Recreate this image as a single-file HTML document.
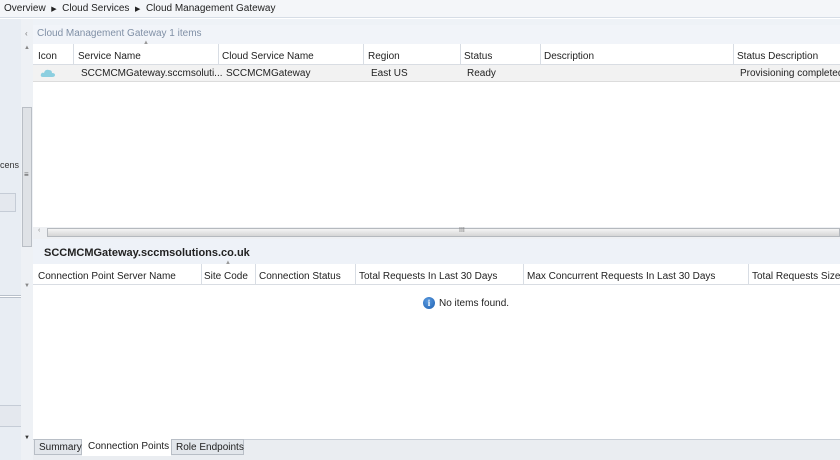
<!DOCTYPE html>
<html><head><style>
*{margin:0;padding:0;box-sizing:border-box}
body{width:840px;height:460px;overflow:hidden;background:#fff;font-family:"Liberation Sans",sans-serif;font-size:10px;color:#222;position:relative}
.a{position:absolute;white-space:nowrap}
.sep{position:absolute;width:1px;background:#d8dde4}
</style></head><body>
<div class="a" style="left:0;top:0;width:840px;height:18px;background:#f4f6f9;border-bottom:1px solid #d6dde6"></div>
<div class="a" style="left:4px;top:3px">Overview&nbsp;&nbsp;<span style="font-size:7px">▶</span>&nbsp;&nbsp;Cloud Services&nbsp;&nbsp;<span style="font-size:7px">▶</span>&nbsp;&nbsp;Cloud Management Gateway</div>
<div class="a" style="left:0;top:19px;width:840px;height:6px;background:#eef2f7"></div>
<!-- left panel -->
<div class="a" style="left:0;top:19px;width:21px;height:441px;background:#e8edf3"></div>
<div class="a" style="left:0;top:160px;font-size:9px;color:#333">cens</div>
<div class="a" style="left:0;top:193px;width:16px;height:19px;background:#e4e8ee;border:1px solid #c5ccd6;border-left:none"></div>
<div class="a" style="left:0;top:295px;width:28px;height:3px;border:1px solid #b8c0ca;border-left:none;background:#fff"></div>
<div class="a" style="left:0;top:405px;width:28px;height:22px;background:#e4e8ee;border:1px solid #c5ccd6;border-left:none"></div>
<div class="a" style="left:21px;top:19px;width:12px;height:441px;background:#eef1f5"></div>
<div class="a" style="left:22px;top:107px;width:10px;height:140px;background:#dfe2e6;border:1px solid #b9bec5"></div>
<div class="a" style="left:24px;top:170px;font-size:8px;color:#555">≡</div>
<div class="a" style="left:24px;top:45px;font-size:6px;color:#888">▲</div>
<div class="a" style="left:24px;top:283px;font-size:6px;color:#888">▼</div>
<div class="a" style="left:24px;top:435px;font-size:6px;color:#333">▼</div>
<div class="a" style="left:25px;top:29px;font-size:8px;color:#777">‹</div>
<!-- top list -->
<div class="a" style="left:33px;top:25px;width:807px;height:19px;background:#f1f4f9"></div>
<div class="a" style="left:37px;top:28px;color:#8090a6">Cloud Management Gateway 1 items</div>
<div class="a" style="left:33px;top:44px;width:807px;height:21px;border-bottom:1px solid #d9dde3"></div>
<div class="sep" style="left:73px;top:44px;height:20px"></div>
<div class="sep" style="left:218px;top:44px;height:20px"></div>
<div class="sep" style="left:363px;top:44px;height:20px"></div>
<div class="sep" style="left:460px;top:44px;height:20px"></div>
<div class="sep" style="left:540px;top:44px;height:20px"></div>
<div class="sep" style="left:733px;top:44px;height:20px"></div>
<div class="a" style="left:143px;top:40px;font-size:6px;color:#999">▲</div>
<div class="a" style="left:38px;top:51px">Icon</div>
<div class="a" style="left:78px;top:51px">Service Name</div>
<div class="a" style="left:222px;top:51px">Cloud Service Name</div>
<div class="a" style="left:368px;top:51px">Region</div>
<div class="a" style="left:464px;top:51px">Status</div>
<div class="a" style="left:544px;top:51px">Description</div>
<div class="a" style="left:737px;top:51px">Status Description</div>
<div class="a" style="left:33px;top:65px;width:807px;height:17px;background:#f2f2f2;border-bottom:1px solid #dcdcdc"></div>
<svg class="a" style="left:40px;top:68px" width="16" height="10"><path d="M3 9 Q0 9 1 6 Q2 4 4 5 Q5 1 9 2 Q12 2 12 5 Q15 5 15 7 Q15 9 12 9Z" fill="#8ccfe0"/></svg>
<div class="a" style="left:81px;top:68px">SCCMCMGateway.sccmsoluti...</div>
<div class="a" style="left:226px;top:68px">SCCMCMGateway</div>
<div class="a" style="left:371px;top:68px">East US</div>
<div class="a" style="left:467px;top:68px">Ready</div>
<div class="a" style="left:740px;top:68px">Provisioning completed</div>
<!-- h scroll -->
<div class="a" style="left:33px;top:227px;width:807px;height:12px;background:#eef0f3"></div>
<div class="a" style="left:47px;top:228px;width:793px;height:9px;background:linear-gradient(#f4f4f4,#d6d6d6);border:1px solid #b5b9be"></div>
<div class="a" style="left:38px;top:227px;font-size:7px;color:#888">‹</div>
<div class="a" style="left:459px;top:227px;font-size:7px;color:#777">III</div>
<!-- details -->
<div class="a" style="left:33px;top:239px;width:807px;height:25px;background:#eef2f8"></div>
<div class="a" style="left:44px;top:247px;font-size:11px;font-weight:bold;color:#222">SCCMCMGateway.sccmsolutions.co.uk</div>
<div class="a" style="left:33px;top:264px;width:807px;height:21px;border-bottom:1px solid #d9dde3;background:#fff"></div>
<div class="sep" style="left:201px;top:264px;height:20px"></div>
<div class="sep" style="left:255px;top:264px;height:20px"></div>
<div class="sep" style="left:355px;top:264px;height:20px"></div>
<div class="sep" style="left:523px;top:264px;height:20px"></div>
<div class="sep" style="left:748px;top:264px;height:20px"></div>
<div class="a" style="left:225px;top:260px;font-size:6px;color:#999">▲</div>
<div class="a" style="left:38px;top:271px">Connection Point Server Name</div>
<div class="a" style="left:204px;top:271px">Site Code</div>
<div class="a" style="left:259px;top:271px">Connection Status</div>
<div class="a" style="left:359px;top:271px">Total Requests In Last 30 Days</div>
<div class="a" style="left:527px;top:271px">Max Concurrent Requests In Last 30 Days</div>
<div class="a" style="left:752px;top:271px">Total Requests Size (</div>
<div class="a" style="left:423px;top:297px;width:12px;height:12px;border-radius:50%;background:radial-gradient(circle at 40% 35%,#5b9be0,#1d5fb0);color:#fff;font-size:9px;font-weight:bold;text-align:center;line-height:12px;font-family:'Liberation Serif',serif">i</div>
<div class="a" style="left:439px;top:298px">No items found.</div>
<!-- tabs -->
<div class="a" style="left:33px;top:439px;width:807px;height:1px;background:#c8ced6"></div>
<div class="a" style="left:33px;top:440px;width:807px;height:20px;background:#eaedf1"></div>
<div class="a" style="left:34px;top:439px;width:48px;height:16px;background:#e2e6eb;border:1px solid #b8bec6;padding:2px 0 0 4px">Summary</div>
<div class="a" style="left:82px;top:439px;width:89px;height:17px;background:#fff;padding:2px 0 0 6px">Connection Points</div>
<div class="a" style="left:171px;top:439px;width:73px;height:16px;background:#e2e6eb;border:1px solid #b8bec6;padding:2px 0 0 4px">Role Endpoints</div>
</body></html>
